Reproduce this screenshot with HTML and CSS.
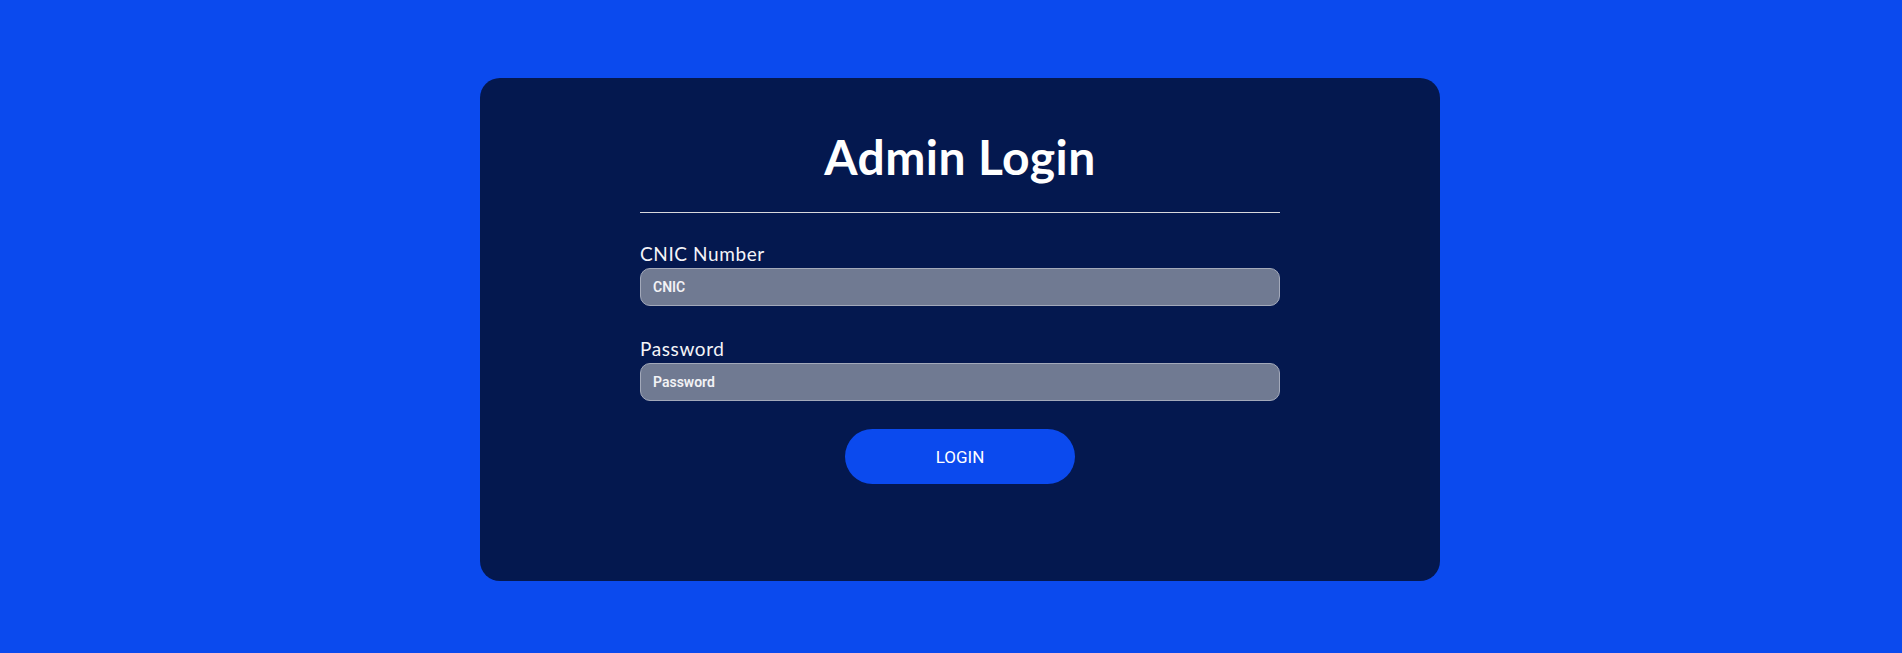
FILE: index.html
```html
<!DOCTYPE html>
<html lang="en">
<head>
<meta charset="utf-8">
<title>Admin Login</title>
<link rel="stylesheet" href="styles.css">
</head>
<body>
<main class="page">
  <section class="card">
    <h1 class="title">Admin Login</h1>
    <form class="form">
      <hr class="divider">
      <label class="field">
        <span class="label">CNIC Number</span>
        <input class="input" type="text" placeholder="CNIC">
      </label>
      <label class="field field-second">
        <span class="label">Password</span>
        <input class="input" type="password" placeholder="Password">
      </label>
      <div class="actions">
        <button class="btn" type="button">LOGIN</button>
      </div>
    </form>
  </section>
</main>
</body>
</html>
```
FILE: styles.css
```css
html, body {
  margin: 0;
  padding: 0;
}
body {
  background: #0b4aee;
  min-height: 100vh;
  font-family: "Lato", "Noto Sans", sans-serif;
}
.page {
  display: flex;
  justify-content: center;
  padding: 78px 0 0 18px;
}
.card {
  box-sizing: border-box;
  width: 960px;
  height: 503px;
  background: #04184f;
  border-radius: 20px;
  padding-top: 51px;
  display: flex;
  flex-direction: column;
  align-items: center;
}
.title {
  margin: 0;
  font-family: "Lato", sans-serif;
  font-weight: 700;
  font-size: 48px;
  letter-spacing: 0.4px;
  line-height: 56px;
  color: #ffffff;
}
.form {
  width: 640px;
  display: flex;
  flex-direction: column;
}
.divider {
  margin: 27px 0 0 0;
  border: 0;
  height: 0;
  border-top: 1.5px solid #d8d8dc;
}
.field {
  display: flex;
  flex-direction: column;
  gap: 2px;
  margin-top: 29px;
}
.field-second {
  margin-top: 31px;
}
.label {
  font-family: "Lato", sans-serif;
  font-size: 19px;
  letter-spacing: 0.6px;
  line-height: 24px;
  color: #f4f4f8;
}
.input {
  box-sizing: border-box;
  height: 38px;
  width: 100%;
  background: #707a92;
  border: 1px solid #a3a9ba;
  border-radius: 10px;
  padding: 0 12px;
  font-family: "Roboto", sans-serif;
  font-weight: 600;
  font-size: 14px;
  color: #f2f2f5;
  outline: none;
}
.input::placeholder {
  color: #f2f2f5;
  opacity: 1;
}
.actions {
  display: flex;
  justify-content: center;
  margin-top: 28px;
}
.btn {
  width: 230px;
  height: 55px;
  border: 0;
  border-radius: 28px;
  background: #0b4aee;
  color: #ffffff;
  font-family: "Roboto", sans-serif;
  font-size: 17px;
  font-weight: 400;
  cursor: pointer;
}
```
